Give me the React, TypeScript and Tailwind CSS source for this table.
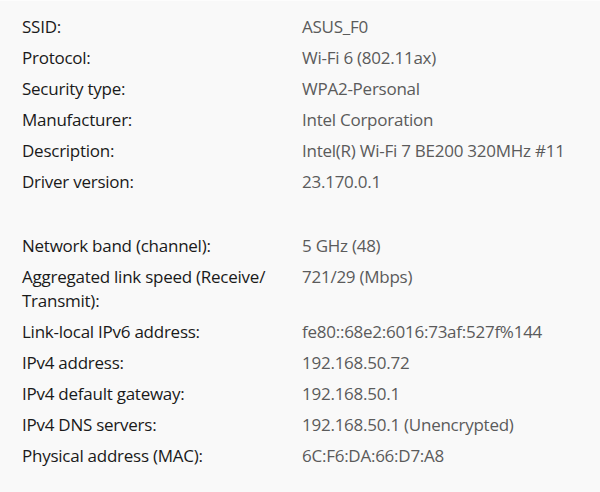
import React from "react";

type Row = { label: React.ReactNode; value: string } | null;

const rows: Row[] = [
  { label: "SSID:", value: "ASUS_F0" },
  { label: "Protocol:", value: "Wi-Fi 6 (802.11ax)" },
  { label: "Security type:", value: "WPA2-Personal" },
  { label: "Manufacturer:", value: "Intel Corporation" },
  { label: "Description:", value: "Intel(R) Wi-Fi 7 BE200 320MHz #11" },
  { label: "Driver version:", value: "23.170.0.1" },
  null,
  { label: "Network band (channel):", value: "5 GHz (48)" },
  {
    label: (
      <>
        Aggregated link speed (Receive/
        <wbr />
        Transmit):
      </>
    ),
    value: "721/29 (Mbps)",
  },
  { label: "Link-local IPv6 address:", value: "fe80::68e2:6016:73af:527f%144" },
  { label: "IPv4 address:", value: "192.168.50.72" },
  { label: "IPv4 default gateway:", value: "192.168.50.1" },
  { label: "IPv4 DNS servers:", value: "192.168.50.1 (Unencrypted)" },
  { label: "Physical address (MAC):", value: "6C:F6:DA:66:D7:A8" },
];

export default function App() {
  return (
    <main
      className="w-[600px] h-[492px] bg-[#f9f9f9] border-t border-[#fdfdfd] pl-[22px] pt-[14px] overflow-hidden"
      style={{ fontFamily: '"Segoe UI", "Open Sans", "Noto Sans", sans-serif' }}
    >
      <div className="flex flex-col gap-[7px] text-[17px] leading-[24px] tracking-[-0.25px]">
        {rows.map((row, idx) =>
          row === null ? (
            <div key={idx} className="h-[26px]" />
          ) : (
            <div key={idx} className="grid grid-cols-[280px_1fr]">
              <div className="text-[#1a1a1a] pr-4">{row.label}</div>
              <div className="text-[#5b5b5b]">{row.value}</div>
            </div>
          )
        )}
      </div>
    </main>
  );
}
